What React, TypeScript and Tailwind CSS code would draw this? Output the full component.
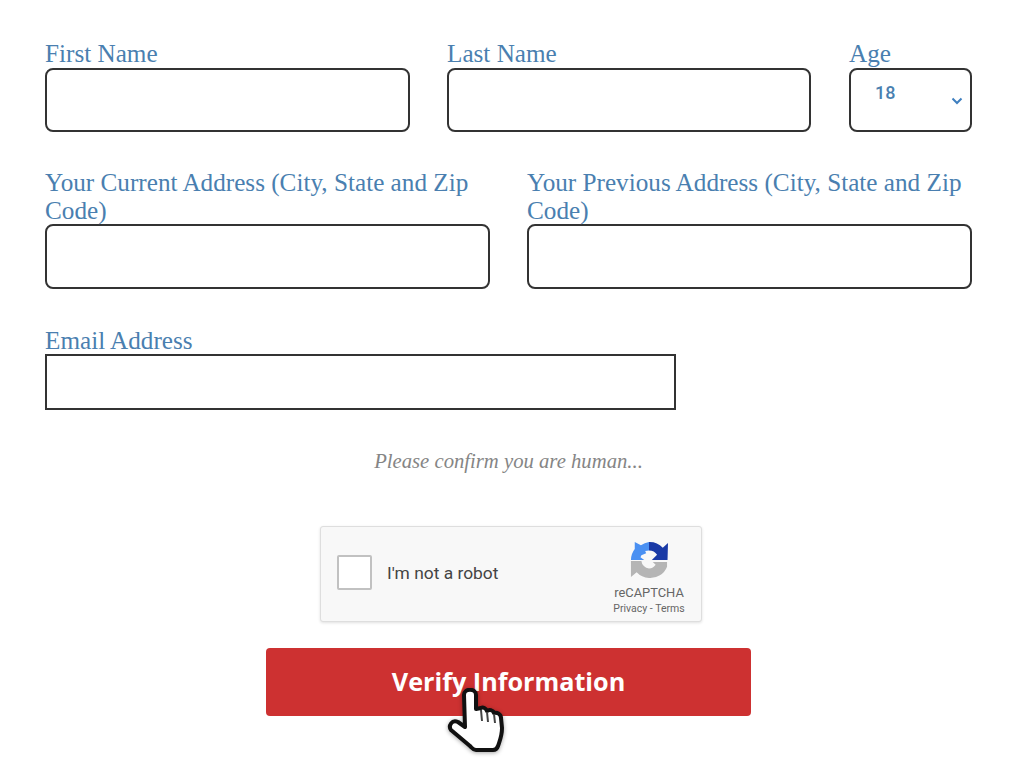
import React from "react";

const labelCls = "block font-['Liberation_Serif',serif] text-[25.2px] leading-[28px] text-[#4a7fb0]";
const inputCls = "block w-full border-2 border-[#333] rounded-lg bg-white";

function Field({ label, className, h }: { label: string; className: string; h: string }) {
  return (
    <div className={className}>
      <label className={labelCls}>{label}</label>
      <div className={`${inputCls} ${h}`} />
    </div>
  );
}

function Logo() {
  return (
    <svg width="40" height="38" viewBox="0 0 40 40" className="block">
      <path d="M1 20 A19 19 0 0 1 5 8.500 L5 1 L11.500 4.500 A19 19 0 0 1 20 1 L20 10 L16 10.500 L17 13 L12 15 L11 17 L15 20 Z" fill="#4a90f2" />
      <path d="M20 1 A19 19 0 0 1 34.500 7 L40 2 L39.500 20 L23 20 L28.500 14.500 A10 10 0 0 0 20 10 Z" fill="#1a3aa6" />
      <path d="M1 21 L12 21 A9 9 0 0 0 20 29 A9 9 0 0 0 27 25 L24 22 L39 22 L39 27 A19 19 0 0 1 20 39 A19 19 0 0 1 7 33 L1 38 Z" fill="#b5b5b5" />
    </svg>
  );
}

function Cursor() {
  return (
    <svg width="62" height="66" viewBox="0 0 62 66" className="absolute left-[445px] top-[688px] drop-shadow-[0_1px_2px_rgba(0,0,0,0.35)]">
      <path
        d="M19 7 C19 0 31 0 31 7 L31 21 L36 20 C38 19 41 20 42 23 C44 21 48 22 49 25 C52 24 56 26 56 30 L57 40 C57 48 55 52 53 58 C52 61 50 62 48 62 L31 62 C28 62 27 60 25 58 L6 42 C3 38 7 31 13 34 L20 39 Z"
        fill="#fff"
        stroke="#111"
        strokeWidth="4"
        strokeLinejoin="round"
      />
      <path d="M36 22 L37 33 M42 24 L43 34 M49 26 L50 35" stroke="#444" strokeWidth="2" fill="none" />
    </svg>
  );
}

export default function App() {
  return (
    <div className="relative w-[1024px] h-[765px] bg-white overflow-hidden pl-[45px] pr-[52px] pt-[40px]">
      <div className="flex">
        <Field label="First Name" className="w-[365px] mr-[37px]" h="h-[64px]" />
        <Field label="Last Name" className="w-[364px] mr-[38px]" h="h-[64px]" />
        <div className="w-[123px]">
          <label className={labelCls}>Age</label>
          <div className={`${inputCls} h-[64px] relative pl-[24px] pt-[13px] font-['Roboto',sans-serif] font-medium text-[18px] leading-[20px] text-[#4a7fb0]`}>
            18
            <svg width="12" height="8" viewBox="0 0 12 8" className="absolute right-[7px] top-[27px]">
              <path d="M1.500 1.500 L6 6 L10.500 1.500" fill="none" stroke="#3f7fbf" strokeWidth="2" />
            </svg>
          </div>
        </div>
      </div>

      <div className="flex gap-[37px] mt-[37px]">
        <Field label="Your Current Address (City, State and Zip Code)" className="w-[445px]" h="h-[65px] -mt-[1px]" />
        <Field label="Your Previous Address (City, State and Zip Code)" className="w-[445px]" h="h-[65px] -mt-[1px]" />
      </div>

      <div className="mt-[38px] w-[631px]">
        <label className={labelCls}>Email Address</label>
        <div className="border-2 border-[#333] h-[56px] bg-white -mt-[1px]" />
      </div>

      <p className="mt-[37px] w-[927px] text-center font-['Liberation_Serif',serif] italic text-[20.700px] leading-[28px] text-[#858585]">
        Please confirm you are human...
      </p>

      <div className="ml-[275px] mt-[51px] w-[382px] h-[96px] bg-[#f8f8f8] border border-[#dedede] rounded-[3px] shadow-[0_1px_3px_rgba(0,0,0,0.12)] flex items-center pl-[16px] pr-[16px]">
        <div className="w-[35px] h-[35px] mb-[3px] bg-white border-2 border-[#c1c1c1] rounded-[2px]" />
        <span className="ml-[15px] mb-[1px] font-['Roboto',sans-serif] text-[17.400px] text-[#444]">I'm not a robot</span>
        <div className="ml-auto mt-[8px] flex flex-col items-center w-[72px] font-['Roboto',sans-serif] text-[#666]">
          <Logo />
          <span className="text-[12.900px] leading-[14px] mt-[7px]">reCAPTCHA</span>
          <span className="text-[10.500px] leading-[15px] mt-[1px] whitespace-nowrap">Privacy - Terms</span>
        </div>
      </div>

      <button className="block ml-[221px] mt-[26px] w-[485px] h-[68px] bg-[#cd3131] rounded-[4px] text-white font-['Open_Sans',sans-serif] font-bold text-[25.200px]">
        Verify Information
      </button>
      <Cursor />
    </div>
  );
}
